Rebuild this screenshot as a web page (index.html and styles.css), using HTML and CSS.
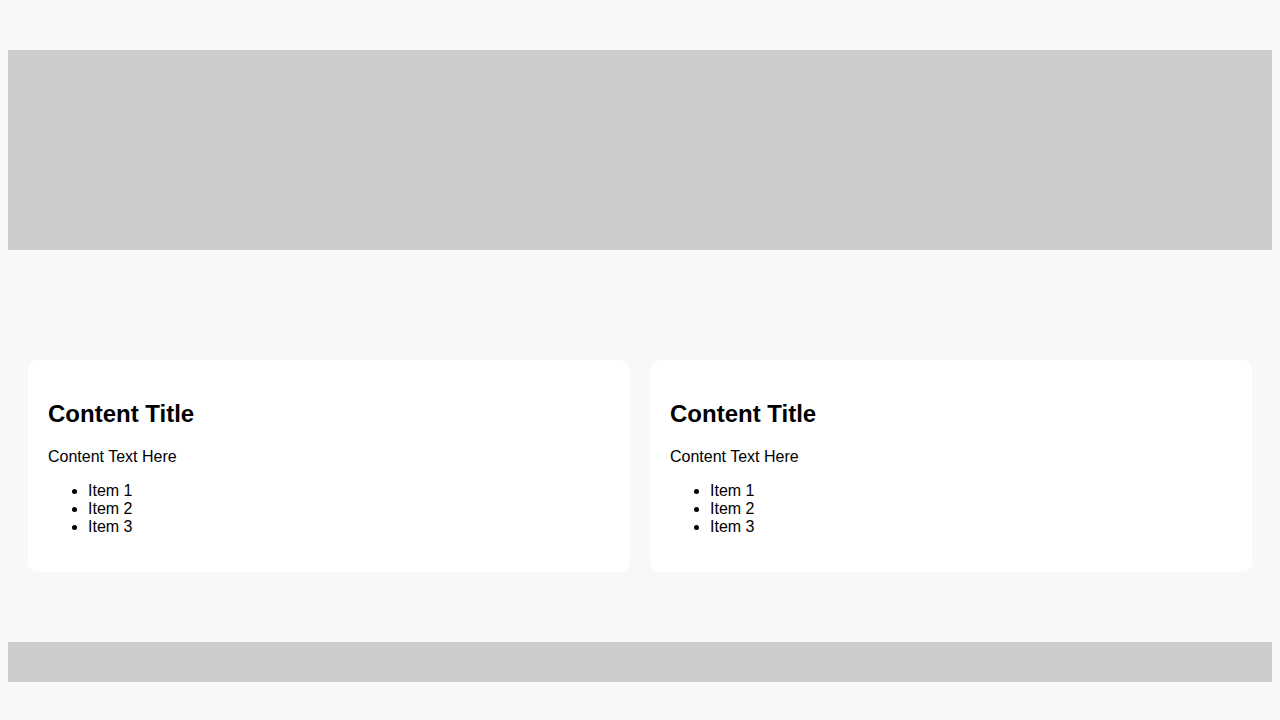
FILE: index.html
```html
<!DOCTYPE html>
<html>
<head>
<meta charset="utf-8">
<link rel="stylesheet" href="styles.css">
</head>
<body>
<header class="banner"></header>
<main class="content">
  <section class="card">
    <h2 class="card-title">Content Title</h2>
    <p class="card-text">Content Text Here</p>
    <ul class="card-list">
      <li>Item 1</li>
      <li>Item 2</li>
      <li>Item 3</li>
    </ul>
  </section>
  <section class="card">
    <h2 class="card-title">Content Title</h2>
    <p class="card-text">Content Text Here</p>
    <ul class="card-list">
      <li>Item 1</li>
      <li>Item 2</li>
      <li>Item 3</li>
    </ul>
  </section>
</main>
<footer class="footer"></footer>
</body>
</html>
```
FILE: styles.css
```css
html {
  background: #f8f8f8;
}
body {
  margin: 0 8px;
  padding: 50px 0 38px;
  background: #f8f8f8;
  font-family: "Liberation Sans", Arial, sans-serif;
  color: #000;
}
.banner {
  display: block;
  height: 200px;
  background: #cccccc;
}
.content {
  display: grid;
  grid-template-columns: 1fr 1fr;
  gap: 20px;
  padding: 20px;
  margin-top: 90px;
}
.card {
  background: #ffffff;
  border-radius: 10px;
  padding: 20px;
}
.card-title {
  font-size: 24px;
  font-weight: bold;
  margin: 20px 0;
}
.card-text {
  font-size: 16px;
  margin: 0 0 16px;
}
.card-list {
  font-size: 16px;
  margin: 0 0 16px;
  padding-left: 40px;
}
.footer {
  display: block;
  height: 40px;
  margin-top: 50px;
  background: #cccccc;
}
```
